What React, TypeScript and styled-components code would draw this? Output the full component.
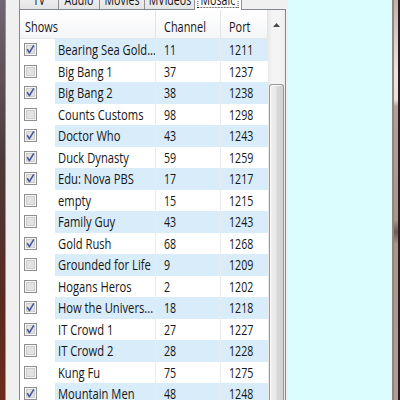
import React from "react";
import styled, { createGlobalStyle } from "styled-components";

const GlobalStyle = createGlobalStyle`
  html, body { margin: 0; padding: 0; }
  body { font-family: "Open Sans", "Noto Sans", sans-serif; color: #161616; }
`;

type Show = { name: string; channel: number; port: number; on: boolean };

const shows: Show[] = [
  { name: "Bearing Sea Gold...", channel: 11, port: 1211, on: true },
  { name: "Big Bang 1", channel: 37, port: 1237, on: false },
  { name: "Big Bang 2", channel: 38, port: 1238, on: true },
  { name: "Counts Customs", channel: 98, port: 1298, on: false },
  { name: "Doctor Who", channel: 43, port: 1243, on: true },
  { name: "Duck Dynasty", channel: 59, port: 1259, on: true },
  { name: "Edu: Nova PBS", channel: 17, port: 1217, on: true },
  { name: "empty", channel: 15, port: 1215, on: false },
  { name: "Family Guy", channel: 43, port: 1243, on: false },
  { name: "Gold Rush", channel: 68, port: 1268, on: true },
  { name: "Grounded for Life", channel: 9, port: 1209, on: false },
  { name: "Hogans Heros", channel: 2, port: 1202, on: false },
  { name: "How the Univers...", channel: 18, port: 1218, on: true },
  { name: "IT Crowd 1", channel: 27, port: 1227, on: true },
  { name: "IT Crowd 2", channel: 28, port: 1228, on: false },
  { name: "Kung Fu", channel: 75, port: 1275, on: false },
  { name: "Mountain Men", channel: 48, port: 1248, on: true },
];

const tabs = [
  { label: "TV", w: 40 },
  { label: "Audio", w: 42 },
  { label: "Movies", w: 46 },
  { label: "MVideos", w: 51 },
  { label: "Mosaic", w: 48, active: true },
];

const Window = styled.div`
  display: flex;
  width: 400px;
  height: 400px;
  overflow: hidden;
`;

const LeftEdge = styled.div`
  width: 5px;
  flex-shrink: 0;
  background: linear-gradient(#6e6672, #4c3a3a 40%, #5a2a20 75%, #6c2c1c);
  border-right: 1px solid #9c9090;
`;

const TabPane = styled.div`
  width: 281px;
  flex-shrink: 0;
  display: flex;
  flex-direction: column;
  background: #f0f0f0;
`;

const TabStrip = styled.div`
  height: 9px;
  display: flex;
  align-items: flex-end;
  padding-left: 13px;
`;

const Tab = styled.div<{ $active?: boolean; $w: number }>`
  position: relative;
  z-index: ${(p) => (p.$active ? 2 : 1)};
  box-sizing: border-box;
  width: ${(p) => p.$w}px;
  height: ${(p) => (p.$active ? 22 : 20)}px;
  margin-bottom: ${(p) => (p.$active ? -1 : 0)}px;
  margin-left: -1px;
  &:first-child { margin-left: 0; }
  display: flex;
  align-items: flex-end;
  justify-content: center;
  padding-bottom: ${(p) => (p.$active ? 2 : 1)}px;
  border: 1px solid #8d9096;
  border-bottom: none;
  border-radius: 2px 2px 0 0;
  background: ${(p) => (p.$active ? "#ffffff" : "linear-gradient(#f6f6f6, #e4e4e4)")};
  font-size: 14px;
  line-height: 14px;
`;

const TabText = styled.span<{ $focus?: boolean }>`
  display: inline-block;
  white-space: nowrap;
  transform: scaleX(0.76);
  border: 1px dotted ${(p) => (p.$focus ? "#222" : "transparent")};
  padding: 0 3px;
`;

const ListBox = styled.div`
  margin-left: 13px;
  flex: 1;
  width: 267px;
  box-sizing: border-box;
  display: flex;
  border: 1px solid #828790;
  border-bottom: none;
  background: #ffffff;
`;

const Table = styled.div`
  width: 248px;
  display: grid;
  grid-template-columns: 35px 101px 65px 47px;
  grid-template-rows: 29px;
  grid-auto-rows: 21.5px;
  align-content: start;
`;

const HeadCell = styled.div<{ $span?: number; $pad: number }>`
  grid-column: span ${(p) => p.$span ?? 1};
  box-sizing: border-box;
  display: flex;
  align-items: center;
  padding: 4px 0 0 ${(p) => p.$pad}px;
  background: linear-gradient(#ffffff, #f4f5f7);
  border-right: 1px solid #e3e4e6;
  border-bottom: 1px solid #e6e7e9;
  font-size: 14px;
`;

const Cell = styled.div<{ $shade?: boolean; $pad: number; $line?: boolean }>`
  display: flex;
  align-items: center;
  box-sizing: border-box;
  padding-left: ${(p) => p.$pad}px;
  background: ${(p) => (p.$shade ? "#d8ecfa" : "transparent")};
  border-right: 1px solid ${(p) => (p.$line ? "#e8ecef" : "transparent")};
  font-size: 14px;
  overflow: hidden;
`;

const Label = styled.span<{ $squeeze?: number }>`
  display: inline-block;
  white-space: nowrap;
  transform: scaleX(${(p) => p.$squeeze ?? 0.78});
  transform-origin: left center;
`;

const ScrollBar = styled.div`
  width: 17px;
  display: flex;
  flex-direction: column;
  background: linear-gradient(90deg, #e9e9e9, #f4f4f4 25%, #f4f4f4 75%, #ececec);
`;

const ArrowButton = styled.div`
  height: 28px;
  display: flex;
  align-items: center;
  justify-content: center;
  padding-top: 1px;
`;

const Thumb = styled.div`
  flex: 1;
  margin: 45px 1px 0 1px;
  border: 1px solid #989898;
  border-bottom: none;
  border-radius: 3px 3px 0 0;
  background: linear-gradient(90deg, #f2f2f2, #e8e8e8 45%, #d9d9d9 55%, #d2d2d2);
  box-shadow: inset 1px 1px 0 #fbfbfb;
`;

const CyanPanel = styled.div`
  flex: 1;
  background: #dbfdfd;
  border-left: 1px solid #e8f4f4;
`;

const RightEdge = styled.div`
  width: 4px;
  flex-shrink: 0;
  border-left: 2px solid #8e8686;
  border-right: 2px solid #2a1c1a;
  background: linear-gradient(
    #c2b2ae 0,
    #eee2de 18%,
    #eadeda 25%,
    #b3a198 26.5%,
    #ab968c 55%,
    #6e5a52 58%,
    #ab968c 61%,
    #b29e95
  );
`;

const CheckBox: React.FC<{ on: boolean }> = ({ on }) => (
  <svg width="13" height="13" viewBox="0 0 13 13">
    <rect x="0.5" y="0.5" width="12" height="12" fill="#f6f6f6" stroke="#8e8f8f" />
    <rect x="2.5" y="2.5" width="8" height="8" fill="#e2e2e2" stroke="#cdcdcd" />
    {on && (
      <path
        d="M3.2 6.2 L5.4 9.6 L9.8 2.4"
        fill="none"
        stroke="#45559a"
        strokeWidth="1.6"
        strokeLinejoin="round"
      />
    )}
  </svg>
);

export default function App() {
  return (
    <>
      <GlobalStyle />
      <Window>
        <LeftEdge />
        <TabPane>
          <TabStrip>
            {tabs.map((t) => (
              <Tab key={t.label} $w={t.w} $active={t.active}>
                <TabText $focus={t.active}>{t.label}</TabText>
              </Tab>
            ))}
          </TabStrip>
          <ListBox>
            <Table>
              <HeadCell $span={2} $pad={5}>
                <Label>Shows</Label>
              </HeadCell>
              <HeadCell $pad={8}>
                <Label>Channel</Label>
              </HeadCell>
              <HeadCell $pad={8}>
                <Label>Port</Label>
              </HeadCell>
              {shows.map((s, i) => {
                const shade = i % 2 === 0;
                return (
                  <React.Fragment key={s.name}>
                    <Cell $pad={4}>
                      <CheckBox on={s.on} />
                    </Cell>
                    <Cell $pad={3} $shade={shade} $line>
                      <Label $squeeze={0.8}>{s.name}</Label>
                    </Cell>
                    <Cell $pad={8} $shade={shade} $line>
                      <Label $squeeze={0.76}>{s.channel}</Label>
                    </Cell>
                    <Cell $pad={8} $shade={shade}>
                      <Label $squeeze={0.76}>{s.port}</Label>
                    </Cell>
                  </React.Fragment>
                );
              })}
            </Table>
            <ScrollBar>
              <ArrowButton>
                <svg width="7" height="4" viewBox="0 0 7 4">
                  <path d="M0 4 L3.5 0 L7 4 Z" fill="#4a4a4a" />
                </svg>
              </ArrowButton>
              <Thumb />
            </ScrollBar>
          </ListBox>
        </TabPane>
        <CyanPanel />
        <RightEdge />
      </Window>
    </>
  );
}
